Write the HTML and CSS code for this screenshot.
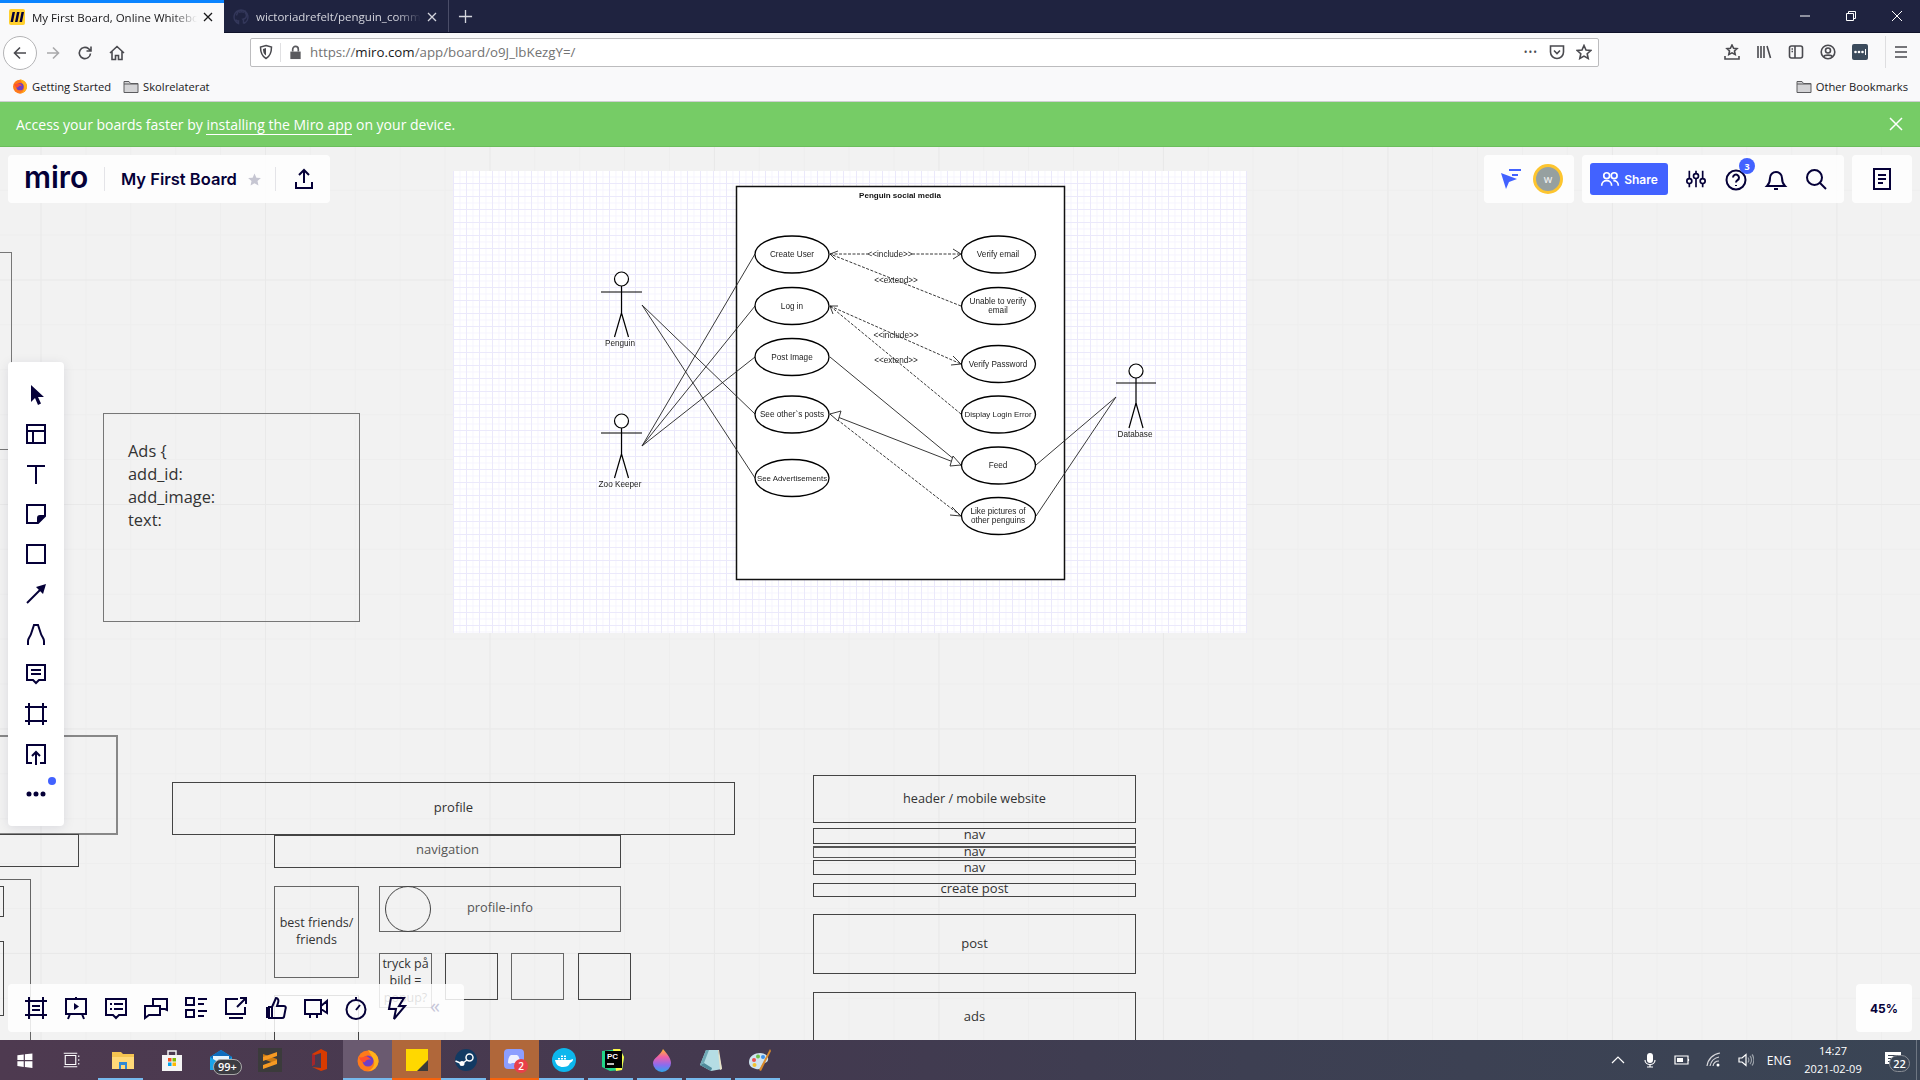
FILE: index.html
```html
<!DOCTYPE html>
<html lang="en">
<head>
  <meta charset="UTF-8">
  <title>My First Board, Online Whiteboard</title>
  <link rel="stylesheet" href="styles.css">
</head>
<body>

  <svg class="defs" width="0" height="0">
    <defs>
      <symbol id="firefox" viewBox="0 0 24 24">
        <circle cx="12" cy="13" r="10.5" fill="#ff7a1a"/>
        <path d="M12 2c5 1 11 5 10.500 12-1 5-5 9-10.500 9 5-2 7-6 6-10-1-3-3-6-6-11z" fill="#ffb21a"/>
        <circle cx="12" cy="13" r="5.500" fill="#6f3fc4"/>
        <path d="M3 9c2 1 5 0 7-1 2 1 4 2 5 4-3-1-5 0-6 2-2 1-5-1-6-5z" fill="#ff4f2e"/>
      </symbol>
      <symbol id="folder" viewBox="0 0 16 16">
        <path d="M1 3.500h5l1.500 2H15v9H1z" fill="#d4d4d6" stroke="#5c5c5f"/>
        <path d="M1 6h14" stroke="#5c5c5f"/>
      </symbol>
    </defs>
  </svg>

  <!-- Browser tabs -->
  <div class="tabstrip">
    <div class="tab tab-active">
      <svg class="favicon" viewBox="0 0 16 16">
        <rect width="16" height="16" rx="2" fill="#ffd02f"/>
        <path d="M3.500 3h2.500l-2 10H1.500zM8 3h2.500l-2 10H6zM12.500 3H15l-2 10h-2.500z" fill="#050038"/>
      </svg>
      <span class="tab-title">My First Board, Online Whiteboard</span>
      <svg class="tab-x" viewBox="0 0 12 12"><path d="M2 2l8 8M10 2l-8 8"/></svg>
    </div>
    <div class="tab tab-other">
      <svg class="favicon" viewBox="0 0 16 16">
        <path d="M8 1a7 7 0 0 0-2.500 13.500v-2.500c-2 .4-2.500-.8-2.800-1.500M10.500 14.500V12c0-1-.3-1.500-.6-1.800 2-.3 3.500-1 3.500-3.700 0-1-.3-1.600-.9-2.200.2-.6.1-1.400-.1-2-.8 0-1.500.4-2 .8a7 7 0 0 0-3.800 0c-.5-.4-1.200-.8-2-.8-.2.6-.3 1.400-.1 2-.6.600-.9 1.200-.9 2.200M8 1a7 7 0 0 1 2.500 13.500" fill="none" stroke="#33375a" stroke-width="1.500"/>
      </svg>
      <span class="tab-title">wictoriadrefelt/penguin_community</span>
      <svg class="tab-x" viewBox="0 0 12 12"><path d="M2 2l8 8M10 2l-8 8"/></svg>
    </div>
    <div class="tab-new">
      <svg viewBox="0 0 16 16"><path d="M8 1v14M1 8h14"/></svg>
    </div>
    <div class="win-controls">
      <svg viewBox="0 0 12 12"><path d="M1 6h10"/></svg>
      <svg viewBox="0 0 12 12"><path d="M1.500 3.500h7v7h-7zM3.500 3.500v-2h7v7h-2"/></svg>
      <svg viewBox="0 0 12 12"><path d="M1 1l10 10M11 1L1 11"/></svg>
    </div>
  </div>

  <!-- Nav bar -->
  <div class="navbar">
    <div class="nav-back">
      <svg class="nav-icon" viewBox="0 0 16 16"><path d="M14 8H2.500M8 2.500L2.500 8 8 13.500"/></svg>
    </div>
    <svg class="nav-icon nav-fwd" viewBox="0 0 16 16"><path d="M2 8h11.500M8 2.500L13.500 8 8 13.500"/></svg>
    <svg class="nav-icon nav-reload" viewBox="0 0 16 16"><path d="M13.500 8.500A5.600 5.600 0 1 1 11.500 3.700L14 6M14 1.500V6H9.500"/></svg>
    <svg class="nav-icon nav-home" viewBox="0 0 16 16"><path d="M1 8l7-6.500L15 8M3 6.500V14.500h3.500v-4h3v4H13V6.500"/></svg>

    <div class="urlbar">
      <svg class="url-shield" viewBox="0 0 16 16"><path d="M8 1.500l5.500 1.500c0 5-1 9-5.500 11.500C3.500 12 2.500 8 2.500 3z"/><path class="shield-half" d="M8 4v7.500C5.500 10 5 7.500 5 5z"/></svg>
      <span class="url-sep"></span>
      <svg class="url-lock" viewBox="0 0 16 16"><path d="M2.500 7h11v8h-11z"/><path class="lock-arc" d="M5 7V4.500a3 3 0 0 1 6 0V7"/></svg>
      <span class="url-text">https://<b>miro.com</b>/app/board/o9J_lbKezgY=/</span>
      <span class="url-right">
        <span class="url-dots">•••</span>
        <svg class="nav-icon nav-pocket" viewBox="0 0 16 16"><path d="M1.500 2h13v6a6.500 6.500 0 0 1-13 0zM5 6.500l3 3 3-3"/></svg>
        <svg class="nav-icon nav-star" viewBox="0 0 16 16"><path d="M8 1.500l2 4.500 4.800.5-3.600 3.200 1 4.800L8 12.100l-4.200 2.400 1-4.800L1.200 6.500 6 6z"/></svg>
      </span>
    </div>

    <div class="nav-tools">
      <svg class="nav-icon" viewBox="0 0 16 16"><path d="M8 1l1.600 3.300 3.400.4-2.500 2.300.7 3.500L8 8.800l-3.200 1.700.7-3.500L3 4.700l3.400-.4zM1 12v3h14v-3"/></svg>
      <svg class="nav-icon" viewBox="0 0 16 16"><path d="M2 2v12M5 2v12M8 2v12M11 2l3.500 12"/></svg>
      <svg class="nav-icon" viewBox="0 0 16 16"><rect x="1.500" y="2" width="13" height="12" rx="2"/><path d="M7 2v12M3.500 5H5M3.500 7.500H5"/></svg>
      <svg class="nav-icon" viewBox="0 0 16 16"><circle cx="8" cy="8" r="6.800"/><circle cx="8" cy="6.500" r="2.500"/><path d="M3.500 13c1-2.500 8-2.500 9 0"/></svg>
      <svg class="lastpass" viewBox="0 0 16 16"><rect width="16" height="16" rx="2" fill="#3b4b5c"/><circle cx="3.500" cy="8" r="1.300" fill="#fff"/><circle cx="7" cy="8" r="1.300" fill="#fff"/><circle cx="10.500" cy="8" r="1.300" fill="#fff"/><path d="M13.500 5v6" stroke="#fff"/></svg>
      <span class="nav-div"></span>
      <svg class="nav-icon nav-menu" viewBox="0 0 16 16"><path d="M2 3h12M2 8h12M2 13h12"/></svg>
    </div>
  </div>

  <!-- Bookmarks -->
  <div class="bookmarks">
    <svg class="bm-icon bm-ff"><use href="#firefox"/></svg>
    <span class="bm-label">Getting Started</span>
    <svg class="bm-icon bm-folder"><use href="#folder"/></svg>
    <span class="bm-label">Skolrelaterat</span>
    <span class="bm-other">
      <svg class="bm-icon"><use href="#folder"/></svg>
      <span class="bm-label">Other Bookmarks</span>
    </span>
  </div>

  <!-- App banner -->
  <div class="banner">
    <span>Access your boards faster by <a class="banner-link">installing the Miro app</a> on your device.</span>
    <svg class="banner-x" viewBox="0 0 14 14"><path d="M1 1l12 12M13 1L1 13"/></svg>
  </div>

  <!-- Board -->
  <div class="board">

    <!-- wireframe leftovers, cut off by the left edge -->
    <div class="wire w-left1"></div>
    <div class="wire w-left2"></div>
    <div class="wire w-left3"></div>
    <div class="wire w-left4"></div>
    <div class="wire w-left5"></div>
    <div class="wire w-left6"></div>

    <div class="wire w-ads-card">
      <p>Ads {</p>
      <p>add_id:</p>
      <p>add_image:</p>
      <p>text:</p>
    </div>

    <div class="wire w-profile">profile</div>
    <div class="wire w-navigation">navigation</div>
    <div class="wire w-friends">best friends/<br>friends</div>
    <div class="wire w-info">profile-info</div>
    <div class="w-avatar"></div>
    <div class="wire w-thumb1">tryck på bild = popup?</div>
    <div class="wire w-thumb2"></div>
    <div class="wire w-thumb3"></div>
    <div class="wire w-thumb4"></div>
    <div class="wire w-under"></div>

    <div class="wire w-header">header / mobile website</div>
    <div class="wire w-nav w-nav1">nav</div>
    <div class="wire w-nav w-nav2">nav</div>
    <div class="wire w-nav w-nav3">nav</div>
    <div class="wire w-create">create post</div>
    <div class="wire w-post">post</div>
    <div class="wire w-ads">ads</div>

    <!-- Use case diagram image -->
    <svg class="diagram" viewBox="453 171 794 462">
      <rect class="d-box" x="736.500" y="186.500" width="328" height="393"/>
      <text class="d-title" x="900" y="198">Penguin social media</text>

      <!-- actor lines -->
      <path class="d-line" d="M642 305L755 414M642 305L755 478M642 446L755 254M642 446L755 306M642 446L755 357"/>
      <path class="d-line" d="M1036 465L1116 397M1036 516L1116 397"/>
      <path class="d-line" d="M830 357L961 465"/>

      <!-- include / extend -->
      <path class="d-dash" d="M830 254H868M912 254H961M961 306L830 254M830 306L961 364M961 414L830 306M830 414L961 516"/>
      <path class="d-line" d="M953 249l8 5-8 5M838 251l-8 3 6 6M953 356l8 8-10 1M838 306l-8 0 3 8M952 507l9 9-11-1"/>
      <path class="d-line" d="M830 414L961 465"/>
      <path class="d-hollow" d="M830 414l11-3-3 10zM961 465l-11 1 3-10z"/>

      <ellipse class="d-node" cx="792" cy="254.500" rx="37" ry="18.500"/>
      <ellipse class="d-node" cx="792" cy="306" rx="37" ry="18.500"/>
      <ellipse class="d-node" cx="792" cy="357" rx="37" ry="18.500"/>
      <ellipse class="d-node" cx="792" cy="414.500" rx="37" ry="18.500"/>
      <ellipse class="d-node" cx="792" cy="478" rx="37" ry="18.500"/>
      <ellipse class="d-node" cx="998.500" cy="254.500" rx="37" ry="18.500"/>
      <ellipse class="d-node" cx="998.500" cy="306" rx="37" ry="18.500"/>
      <ellipse class="d-node" cx="998.500" cy="364" rx="37" ry="18.500"/>
      <ellipse class="d-node" cx="998.500" cy="414.500" rx="37" ry="18.500"/>
      <ellipse class="d-node" cx="998.500" cy="465.500" rx="37" ry="18.500"/>
      <ellipse class="d-node" cx="998.500" cy="516" rx="37" ry="18.500"/>

      <text class="d-label" x="792" y="257">Create User</text>
      <text class="d-label" x="792" y="309">Log in</text>
      <text class="d-label" x="792" y="360">Post Image</text>
      <text class="d-label" x="792" y="417">See other`s posts</text>
      <text class="d-label d-tight" x="792" y="481">See Advertisements</text>
      <text class="d-label" x="998" y="257">Verify email</text>
      <text class="d-label" x="998" y="304">Unable to verify</text>
      <text class="d-label" x="998" y="313">email</text>
      <text class="d-label" x="998" y="367">Verify Password</text>
      <text class="d-label d-tight" x="998" y="417">Display Login Error</text>
      <text class="d-label" x="998" y="468">Feed</text>
      <text class="d-label" x="998" y="514">Like pictures of</text>
      <text class="d-label" x="998" y="523">other penguins</text>

      <text class="d-label" x="890" y="257">&lt;&lt;include&gt;&gt;</text>
      <text class="d-label" x="896" y="283">&lt;&lt;extend&gt;&gt;</text>
      <text class="d-label" x="896" y="338">&lt;&lt;include&gt;&gt;</text>
      <text class="d-label" x="896" y="363">&lt;&lt;extend&gt;&gt;</text>

      <!-- actors -->
      <g class="d-actor">
        <circle cx="621.500" cy="279" r="7"/>
        <path d="M621.500 286V313M601 292H642M621.500 313L614.500 337M621.500 313L628.500 337"/>
      </g>
      <g class="d-actor">
        <circle cx="621.500" cy="421" r="7"/>
        <path d="M621.500 428V454M601 433H642M621.500 454L614.500 478M621.500 454L628.500 478"/>
      </g>
      <g class="d-actor">
        <circle cx="1136" cy="371" r="7"/>
        <path d="M1136 378V403M1116 383H1156M1136 403L1129 428M1136 403L1143 428"/>
      </g>
      <text class="d-label" x="620" y="346">Penguin</text>
      <text class="d-label" x="620" y="487">Zoo Keeper</text>
      <text class="d-label" x="1135" y="437">Database</text>
    </svg>

    <!-- Board top bar -->
    <div class="panel panel-main">
      <span class="miro-logo">miro</span>
      <span class="panel-div"></span>
      <span class="board-name">My First Board</span>
      <svg class="board-star" viewBox="0 0 16 16"><path d="M8 1.500l2 4.500 4.800.5-3.600 3.200 1 4.800L8 12.100l-4.200 2.400 1-4.800L1.200 6.500 6 6z"/></svg>
      <span class="panel-div"></span>
      <svg class="ic board-upload" viewBox="0 0 24 24"><path d="M12 16V3M7 8l5-5 5 5M4 15v6h16v-6"/></svg>
    </div>

    <div class="top-right">
      <div class="panel panel-people">
        <svg class="cursor-filter" viewBox="0 0 24 24"><path class="cf-arrow" d="M2 6l5 16 3-7 8-3z"/><path class="cf-bars" d="M10 3h12M13 8h6"/></svg>
        <span class="avatar">W</span>
      </div>
      <div class="panel panel-actions">
        <button class="share-btn">
          <svg viewBox="0 0 24 24"><circle cx="8" cy="8" r="3.500"/><circle cx="17" cy="8" r="3.500"/><path d="M2 20c0-4 3-6 6-6s6 2 6 6M16 14c3 0 6 2 6 6"/></svg>
          Share
        </button>
        <svg class="ic ic-sliders" viewBox="0 0 24 24"><path d="M4 2v9M4 18v4M12 2v3M12 12v10M20 2v9M20 18v4"/><circle cx="4" cy="14.500" r="3"/><circle cx="12" cy="8.500" r="3"/><circle cx="20" cy="14.500" r="3"/></svg>
        <span class="help">
          <svg class="ic" viewBox="0 0 24 24"><circle cx="12" cy="13" r="9.500"/><path d="M9 10.500a3 3 0 1 1 4.500 2.700c-1 .6-1.500 1.200-1.500 2.300M12 18v1"/></svg>
          <span class="help-badge">3</span>
        </span>
        <svg class="ic" viewBox="0 0 24 24"><path d="M3 19c2-2 3-4 3-8a6 6 0 0 1 12 0c0 4 1 6 3 8zM10 22h4"/></svg>
        <svg class="ic" viewBox="0 0 24 24"><circle cx="10.500" cy="10.500" r="7.500"/><path d="M16 16l6 6"/></svg>
      </div>
      <div class="panel panel-notes">
        <svg class="ic" viewBox="0 0 24 24"><path d="M4 2h16v20H4zM8 8h8M8 12h8M8 16h5"/></svg>
      </div>
    </div>

    <!-- Left tools -->
    <div class="panel tools">
      <svg class="ic ic-solid" viewBox="0 0 24 24"><path d="M7 3v17l4-4 3 7 3-1.500-3-6.500h6z"/></svg>
      <svg class="ic" viewBox="0 0 24 24"><path d="M3 3h18v18H3zM3 9h18M9 9v12"/></svg>
      <svg class="ic ic-t" viewBox="0 0 24 24"><path d="M3 4h18M12 4v18"/></svg>
      <svg class="ic" viewBox="0 0 24 24"><path d="M21 14V3H3v18h11zM14 21v-5a2 2 0 0 1 2-2h5" /><path class="ic-fill" d="M21 14h-5a2 2 0 0 0-2 2v5z"/></svg>
      <svg class="ic" viewBox="0 0 24 24"><path d="M3 3h18v18H3z"/></svg>
      <svg class="ic" viewBox="0 0 24 24"><path d="M3 21L17 7"/><path class="ic-fill" d="M22 2l-3 10-7-7z"/></svg>
      <svg class="ic" viewBox="0 0 24 24"><path d="M4 23v-4c0-3 2-4 3-7l3-9h4l3 9c1 3 3 4 3 7v4"/></svg>
      <svg class="ic" viewBox="0 0 24 24"><path d="M3 3h18v15h-6l-3 3-3-3H3zM7 8h10M7 12h10"/></svg>
      <svg class="ic" viewBox="0 0 24 24"><path d="M5 1v22M19 1v22M1 5h22M1 19h22"/></svg>
      <svg class="ic" viewBox="0 0 24 24"><path d="M8 21H3V3h18v18h-5M12 23V10M8 14l4-4 4 4"/></svg>
      <svg class="ic ic-more" viewBox="0 0 24 24"><circle cx="5" cy="12" r="1.500"/><circle cx="12" cy="12" r="1.500"/><circle cx="19" cy="12" r="1.500"/></svg>
      <span class="tools-dot"></span>
    </div>

    <!-- Bottom tools -->
    <div class="panel bottom-tools">
      <svg class="ic" viewBox="0 0 24 24"><path d="M5 1v22M19 1v22M1 5h22M1 19h22M8 10h8M8 14h8"/></svg>
      <svg class="ic" viewBox="0 0 24 24"><path d="M2 3h20v15H2zM12 1v2M6 18l-2 5M18 18l2 5"/><path class="ic-fill" d="M10 7l5 3.500-5 3.500z"/></svg>
      <svg class="ic" viewBox="0 0 24 24"><path d="M2 3h20v16h-7l-3 3-3-3H2zM6 8h2M6 13h2M10 8h9M10 13h9"/></svg>
      <svg class="ic" viewBox="0 0 24 24"><path d="M9 9V3h14v11l-2-1h-4M1 10h15v9H5l-4 3z"/></svg>
      <svg class="ic" viewBox="0 0 24 24"><path d="M2 2h8v7H2zM2 14h8v7H2zM14 3h9M14 8h6M14 15h9M14 20h6"/></svg>
      <svg class="ic" viewBox="0 0 24 24"><path d="M14 3H2v15h19v-7M5 22h14M13 11L22 2M16 2h6v6"/></svg>
      <svg class="ic" viewBox="0 0 24 24"><path d="M8 11l4-9c2 0 3 2 2 5l-1 3h7c2 0 2 2 1.500 3L20 21c-.5 1-1 1-2 1H8zM3 11v11M8 11H5v11h3"/></svg>
      <svg class="ic" viewBox="0 0 24 24"><path d="M1 4h16v14H1zM17 10l6-5v12l-6-4M6 18v4M13 18v4"/></svg>
      <svg class="ic" viewBox="0 0 24 24"><circle cx="12" cy="13.500" r="9.500"/><path d="M12 1v3M12 14l4-5"/></svg>
      <svg class="ic" viewBox="0 0 24 24"><path d="M7 2h13l-5 8h6L10 23l2-10H5z"/></svg>
      <span class="collapse">«</span>
    </div>

    <div class="panel zoom-level">45%</div>
  </div>

  <!-- Windows taskbar -->
  <div class="taskbar">
    <div class="task-item">
      <svg class="task-icon win-icon" viewBox="0 0 24 24"><path d="M3 5.500l8-1.200V11.500H3zM12.500 4.100L22 3v8.500h-9.500zM3 13h8v7.200l-8-1.200zM12.500 13H22v8.500l-9.500-1.300z" fill="#fff"/></svg>
    </div>
    <div class="task-item">
      <svg class="task-icon tv-icon" viewBox="0 0 24 24"><path d="M3 6h14v12H3zM1 3h18M1 21h18M21 6v2M21 11v2M21 16v2" /></svg>
    </div>
    <div class="task-item is-open">
      <svg class="task-icon" viewBox="0 0 24 24"><path d="M1 4h9l2 2h11v15H1z" fill="#f5c451"/><path d="M1 9h22v12H1z" fill="#ffd978"/><path d="M8 14h8v7h-2v-4h-4v4H8z" fill="#2f8ad6"/></svg>
    </div>
    <div class="task-item">
      <svg class="task-icon" viewBox="0 0 24 24"><path d="M2 7h20v16H2z" fill="#f4f4f4"/><path d="M8 7V3h8v4" fill="none" stroke="#f4f4f4" stroke-width="1.500"/><path d="M8 10h3.500v3.500H8z" fill="#f25022"/><path d="M12.500 10H16v3.500h-3.500z" fill="#7fba00"/><path d="M8 14.500h3.500V18H8z" fill="#00a4ef"/><path d="M12.500 14.500H16V18h-3.500z" fill="#ffb900"/></svg>
    </div>
    <div class="task-item">
      <svg class="task-icon" viewBox="0 0 24 24"><path d="M1 9l11-7 11 7v13H1z" fill="#1aa3e8"/><path d="M1 9l11 7 11-7v0l-11-7z" fill="#0f6cbd"/><path d="M4 8h16v3l-8 5-8-5z" fill="#e7f4fd"/></svg>
      <span class="task-count">99+</span>
    </div>
    <div class="task-item">
      <svg class="task-icon" viewBox="0 0 24 24"><rect width="24" height="24" fill="#3b3b3b"/><path d="M5 11l14 5v-5L5 6z" fill="#c97a14"/><path d="M19 4L5 9v4l14-5zM19 12L5 17v4l14-5z" fill="#f59a23"/></svg>
    </div>
    <div class="task-item">
      <svg class="task-icon" viewBox="0 0 24 24"><path d="M14 1l6 3v17l-6 2-9-4 9 1V5L8 7v9l-3 2V6z" fill="#d83b01"/><path d="M5 6l3 1v9l-3 2z" fill="#a4262c"/></svg>
    </div>
    <div class="task-item is-active">
      <svg class="task-icon"><use href="#firefox"/></svg>
    </div>
    <div class="task-item is-warn">
      <svg class="task-icon" viewBox="0 0 24 24"><path d="M1 1h22v16l-6 6H1z" fill="#ffd800"/><path d="M23 12v11H12z" fill="#3a3a3a"/></svg>
    </div>
    <div class="task-item is-open">
      <svg class="task-icon" viewBox="0 0 24 24"><circle cx="12" cy="12" r="11" fill="#123a63"/><circle cx="15.500" cy="9.500" r="3.500" fill="none" stroke="#fff" stroke-width="1.500"/><circle cx="8" cy="15.500" r="2.500" fill="#fff"/><path d="M1.500 13l6 2.500M9 15l4-3" stroke="#fff" stroke-width="1.500"/></svg>
    </div>
    <div class="task-item is-warn">
      <svg class="task-icon" viewBox="0 0 24 24"><rect x="1" y="1" width="20" height="20" rx="4" fill="#8c9eff"/><path d="M5 15c0-4 1-7 3-8h6c2 1 3 4 3 8-2 1-3 1-4 0H9c-1 1-2 1-4 0z" fill="#eef0ff"/></svg>
      <span class="task-badge">2</span>
    </div>
    <div class="task-item is-open">
      <svg class="task-icon" viewBox="0 0 24 24"><circle cx="12" cy="12" r="12" fill="#0db7ed"/><path d="M3 12h15c1 0 2-1 3-1 0 3-2 3-3 4-1 3-4 4-7 4-4 0-7-2-8-7z" fill="#fff"/><path d="M6 10h2v1.500H6zM9 10h2v1.500H9zM12 10h2v1.500h-2zM9 7.500h2V9H9zM12 7.500h2V9h-2z" fill="#fff"/></svg>
    </div>
    <div class="task-item is-open">
      <svg class="task-icon" viewBox="0 0 24 24"><path d="M1 3l18-2 4 8-2 13-12 1-8-4z" fill="#21d789"/><path d="M12 1l7 0 4 8-2 13-6 1z" fill="#fcf84a"/><path d="M4 3h17v17H4z" fill="#000"/><text class="pc-text" x="6" y="11">PC</text><path d="M6 16h7" stroke="#fff" stroke-width="1.500"/></svg>
    </div>
    <div class="task-item is-open">
      <svg class="task-icon" viewBox="0 0 24 24"><defs><linearGradient id="drop" x1="0" y1="0" x2="0" y2="1"><stop offset="0" stop-color="#ffb92e"/><stop offset=".35" stop-color="#f05fa8"/><stop offset=".7" stop-color="#8a6cf0"/><stop offset="1" stop-color="#2ea7e8"/></linearGradient></defs><path d="M13 1c4 5 8 9 8 14a9 9 0 0 1-18 0c0-5 8-8 10-14z" fill="url(#drop)"/></svg>
    </div>
    <div class="task-item is-open">
      <svg class="task-icon" viewBox="0 0 24 24"><path d="M7 2h12l4 19-11 2-11-6z" fill="#b5dde4"/><path d="M1 17l11 6 1-3-8-5z" fill="#4f8a9a"/><path d="M7 2L1 17l4-2 5-13z" fill="#6fa9b5"/><path d="M19 2h1l3 19-2 1z" fill="#e8e2c8"/></svg>
    </div>
    <div class="task-item is-open">
      <svg class="task-icon" viewBox="0 0 24 24"><path d="M1 14c0-6 6-9 11-9s9 3 8 7-5 2-6 5-2 5-6 4-7-3-7-7z" fill="#cfe3ef"/><circle cx="6" cy="12" r="2" fill="#e8504f"/><circle cx="10" cy="8.500" r="2" fill="#6cc04a"/><circle cx="15" cy="9" r="2" fill="#3b8ee8"/><circle cx="6.500" cy="17" r="2" fill="#f2c230"/><path d="M22 1l1 2-10 20-2-1z" fill="#d98a2b"/></svg>
    </div>

    <div class="tray">
      <svg class="tray-item" viewBox="0 0 16 16"><path d="M2 11l6-6 6 6"/></svg>
      <svg class="tray-item" viewBox="0 0 16 16"><rect class="tray-fill" x="5" y="1" width="6" height="10" rx="3"/><path d="M3 8c0 6 10 6 10 0M8 12v3M5 15h6"/></svg>
      <svg class="tray-item" viewBox="0 0 16 16"><path d="M1 4h13v8H1zM14.500 7v2"/><path class="tray-fill" d="M3 6h6v4H3z"/></svg>
      <svg class="tray-item tray-dim" viewBox="0 0 16 16"><path d="M1 14C2 7 7 2 14 1M4 14c1-5 4-8 9-9M7 14c.6-3 3-5 6-5"/><circle class="tray-fill" cx="12" cy="13" r="1.500"/></svg>
      <svg class="tray-item" viewBox="0 0 16 16"><path d="M1 6h3l4-3.500v11L4 10H1z"/><path class="tray-dimline" d="M10 5.500c1 1.500 1 3.500 0 5M12 4c2 2 2 6 0 8M14 2.500c2.500 3 2.500 8 0 11"/></svg>
      <span class="tray-lang">ENG</span>
      <div class="tray-clock">
        <span>14:27</span>
        <span>2021-02-09</span>
      </div>
      <div class="tray-notify">
        <svg viewBox="0 0 18 18"><path class="tray-fill" d="M1 1h16v12H1z"/><path d="M4 4.500h10M4 7.500h10M4 10.500h10" stroke="#3a4555"/></svg>
        <span class="notify-count">22</span>
      </div>
      <span class="show-desktop"></span>
    </div>
  </div>

</body>
</html>
```

FILE: styles.css
```css
html, body {
  height: 100%;
  margin: 0;
  overflow: hidden;
  font-family: "Open Sans", sans-serif;
}

body {
  display: flex;
  flex-direction: column;
  background: #f2f2f2;
}

.defs {
  position: absolute;
}

/* Browser tabs */
.tabstrip {
  display: flex;
  height: 33px;
  flex: none;
  background: #1f2340;
  border-bottom: 1px solid #10132a;
  box-sizing: border-box;
}

.tab {
  display: flex;
  align-items: center;
  width: 225px;
  box-sizing: border-box;
  padding: 0 10px 0 9px;
  font-size: 11.500px;
}

.tab-active {
  background: #f9f9fa;
  border-top: 3px solid #0a84ff;
  color: #18181a;
  height: 33px;
  width: 224px;
  padding-bottom: 2px;
}

.tab-other {
  color: #d4d5dd;
  border-right: 1px solid #4a4d68;
  padding-top: 1px;
}

.favicon {
  width: 16px;
  height: 16px;
  flex: none;
  margin-right: 7px;
}

.tab-title {
  flex: 1;
  overflow: hidden;
  white-space: nowrap;
  -webkit-mask-image: linear-gradient(90deg, #000 85%, transparent);
  mask-image: linear-gradient(90deg, #000 85%, transparent);
}

.tab-x {
  width: 12px;
  height: 12px;
  margin-left: 5px;
  fill: none;
  stroke: currentColor;
  stroke-width: 1.3;
}

.tab-new {
  display: flex;
  align-items: center;
  padding-left: 9px;
}

.tab-new svg {
  width: 15px;
  height: 15px;
  fill: none;
  stroke: #d4d5dd;
  stroke-width: 1.4;
}

.win-controls {
  display: flex;
  align-items: center;
  gap: 34px;
  margin-left: auto;
  padding-right: 17px;
}

.win-controls svg {
  width: 12px;
  height: 12px;
  fill: none;
  stroke: #fff;
}

/* Nav bar */
.navbar {
  display: flex;
  align-items: center;
  height: 37px;
  flex: none;
  background: #f9f9fa;
  padding-left: 3px;
  padding-top: 3px;
  box-sizing: border-box;
}

.nav-icon {
  width: 16px;
  height: 16px;
  flex: none;
  fill: none;
  stroke: #4a4a4f;
  stroke-width: 1.6;
}

.nav-back {
  display: flex;
  align-items: center;
  justify-content: center;
  width: 32px;
  height: 32px;
  border: 1px solid #b4b4b6;
  border-radius: 50%;
  background: #fff;
}

.nav-fwd {
  margin-left: 8px;
  stroke: #a9a9ab;
}

.nav-reload {
  margin-left: 16px;
}

.nav-home {
  margin-left: 16px;
}

.urlbar {
  display: flex;
  align-items: center;
  width: 1349px;
  height: 29px;
  background: #fff;
  border: 1px solid #bcbcbe;
  border-radius: 2px;
  box-sizing: border-box;
  padding-left: 7px;
  margin-left: 125px;
  margin-top: -2px;
}

.url-shield {
  width: 16px;
  height: 16px;
  fill: none;
  stroke: #4a4a4f;
  stroke-width: 1.5;
}

.shield-half {
  fill: #4a4a4f;
  stroke: none;
}

.url-sep {
  width: 1px;
  height: 19px;
  background: #e0e0e2;
  margin: 0 7px 0 6px;
}

.url-lock {
  width: 15px;
  height: 15px;
  fill: #5a5a5e;
}

.lock-arc {
  fill: none;
  stroke: #5a5a5e;
  stroke-width: 1.8;
}

.url-text {
  margin-left: 7px;
  font-size: 13.300px;
  color: #737373;
}

.url-text b {
  font-weight: 400;
  color: #18181a;
}

.url-right {
  display: flex;
  align-items: center;
  gap: 11px;
  margin-left: auto;
  padding-right: 6px;
}

.url-dots {
  font-size: 10px;
  letter-spacing: 1px;
  color: #4a4a4f;
}

.nav-tools {
  display: flex;
  align-items: center;
  gap: 16px;
  margin-left: 125px;
  margin-top: -3px;
}

.lastpass {
  width: 16px;
  height: 16px;
}

.nav-div {
  width: 1px;
  height: 32px;
  background: #dedee0;
  margin-left: 1px;
}

.nav-menu {
  margin-left: -9px;
}

/* Bookmarks */
.bookmarks {
  display: flex;
  align-items: center;
  height: 32px;
  flex: none;
  background: #f9f9fa;
  border-bottom: 1px solid #cfcfd1;
  box-sizing: border-box;
  padding: 1px 12px 0 12px;
  font-size: 11.200px;
  color: #18181a;
}

.bm-icon {
  width: 16px;
  height: 16px;
  flex: none;
}

.bm-label {
  margin-left: 4px;
}

.bm-folder {
  margin-left: 12px;
}

.bm-other {
  display: flex;
  align-items: center;
  margin-left: auto;
}

/* App banner */
.banner {
  display: flex;
  align-items: center;
  justify-content: space-between;
  height: 45px;
  flex: none;
  background: #76cc66;
  border-bottom: 1px solid #6bbd5c;
  box-sizing: border-box;
  padding: 0 17px 0 16px;
  font-size: 14px;
  color: #fff;
}

.banner-link {
  border-bottom: 1px solid #fff;
}

.banner-x {
  width: 14px;
  height: 14px;
  fill: none;
  stroke: #fff;
  stroke-width: 1.5;
}

/* Board */
.board {
  position: relative;
  flex: 1;
  overflow: hidden;
  background-color: #f2f2f2;
  background-image:
    linear-gradient(90deg, #e9e9e9 1px, transparent 1px),
    linear-gradient(#e9e9e9 1px, transparent 1px),
    linear-gradient(90deg, #eeeeee 1px, transparent 1px),
    linear-gradient(#eeeeee 1px, transparent 1px);
  background-size: 224.500px 224.500px, 224.500px 224.500px, 44.900px 44.900px, 44.900px 44.900px;
  background-position: 40.500px 132.500px, 40.500px 132.500px, 40.500px 42.700px, 40.500px 42.700px;
}

.wire {
  position: absolute;
  display: flex;
  align-items: center;
  justify-content: center;
  box-sizing: border-box;
  border: 1px solid #444;
  padding-bottom: 3px;
  font-size: 13px;
  color: #333;
  text-align: center;
  line-height: 17px;
}

.w-left1 { left: -20px; top: 105px; width: 32px; height: 198px; border-color: #777; }
.w-left2 { left: -20px; top: 588px; width: 138px; height: 100px; border-width: 2px; border-color: #888; }
.w-left3 { left: -20px; top: 687px; width: 99px; height: 33px; }
.w-left4 { left: -20px; top: 732px; width: 51px; height: 220px; border-color: #666; }
.w-left5 { left: -20px; top: 739px; width: 24px; height: 31px; }
.w-left6 { left: -20px; top: 794px; width: 24px; height: 75px; }

.w-ads-card {
  display: block;
  left: 103px;
  top: 266px;
  width: 257px;
  height: 209px;
  padding: 25px 0 0 24px;
  border-color: #777;
  font-size: 16.400px;
  line-height: 23px;
  text-align: left;
}

.w-ads-card p {
  margin: 0;
}

.w-profile { left: 172px; top: 635px; width: 563px; height: 53px; }
.w-navigation { left: 274px; top: 688px; width: 347px; height: 33px; color: #555; padding-bottom: 5px; }
.w-friends { left: 274px; top: 739px; width: 85px; height: 92px; border-color: #666; font-size: 12.500px; }
.w-info { left: 379px; top: 739px; width: 242px; height: 46px; font-size: 12.800px; color: #555; border-color: #666; }
.w-avatar {
  position: absolute;
  left: 385px;
  top: 739px;
  width: 46px;
  height: 46px;
  box-sizing: border-box;
  border: 1px solid #444;
  border-radius: 50%;
}
.w-thumb1 { left: 379px; top: 806px; width: 53px; height: 55px; padding: 1px 0 0; align-items: flex-start; border-color: #666; line-height: 17px; font-size: 12.500px; }
.w-thumb2 { left: 445px; top: 806px; width: 53px; height: 47px; }
.w-thumb3 { left: 511px; top: 806px; width: 53px; height: 47px; border-color: #666; }
.w-thumb4 { left: 578px; top: 806px; width: 53px; height: 47px; }
.w-under { left: 274px; top: 848px; width: 85px; height: 80px; }

.w-header { left: 813px; top: 628px; width: 323px; height: 48px; padding-bottom: 2px; font-size: 12.700px; }
.w-nav { line-height: 14px; }
.w-nav1 { left: 813px; top: 681px; width: 323px; height: 16px; padding-bottom: 5px; }
.w-nav2 { left: 813px; top: 699px; width: 323px; height: 12px; border-top-width: 2px; border-color: #555; padding-bottom: 4px; }
.w-nav3 { left: 813px; top: 713px; width: 323px; height: 15px; padding-bottom: 2px; }
.w-create { left: 813px; top: 736px; width: 323px; height: 14px; line-height: 14px; padding-bottom: 5px; }
.w-post { left: 813px; top: 767px; width: 323px; height: 60px; padding-bottom: 2px; }
.w-ads { left: 813px; top: 845px; width: 323px; height: 80px; padding-bottom: 31px; }

/* Diagram image */
.diagram {
  position: absolute;
  left: 453px;
  top: 24px;
  width: 794px;
  height: 462px;
  filter: blur(.3px);
  background-color: #fff;
  background-image:
    linear-gradient(90deg, #ebe9fb 1px, transparent 1px),
    linear-gradient(#ebe9fb 1px, transparent 1px),
    linear-gradient(90deg, #f5f4fe 1px, transparent 1px),
    linear-gradient(#f5f4fe 1px, transparent 1px);
  background-size: 13px 13px, 13px 13px, 6.500px 6.500px, 6.500px 6.500px;
  background-position: 0 12px, 0 12px, 0 12px, 0 12px;
}

.d-box {
  fill: #fff;
  stroke: #111;
  stroke-width: 1.500;
}

.d-node {
  fill: #fff;
  stroke: #000;
  stroke-width: 1.300;
}

.d-line {
  fill: none;
  stroke: #222;
  stroke-width: .9;
}

.d-dash {
  fill: none;
  stroke: #222;
  stroke-width: .9;
  stroke-dasharray: 3 1.500;
}

.d-hollow {
  fill: #fff;
  stroke: #222;
  stroke-width: .9;
}

.d-actor {
  fill: #fff;
  stroke: #000;
  stroke-width: 1.200;
}

.d-title,
.d-label {
  font-family: "Liberation Sans", sans-serif;
  text-anchor: middle;
}

.d-title {
  font-size: 8px;
  font-weight: 700;
  fill: #111;
}

.d-label {
  font-size: 8.200px;
  fill: #222;
}

.d-tight {
  font-size: 7.900px;
}

/* Miro panels */
.panel {
  position: absolute;
  display: flex;
  align-items: center;
  box-sizing: border-box;
  background: rgba(255, 255, 255, .85);
  border-radius: 4px;
}

.ic {
  width: 24px;
  height: 24px;
  flex: none;
  fill: none;
  stroke: #050038;
  stroke-width: 2;
}

.ic-solid {
  fill: #050038;
  stroke: none;
}

.ic-fill {
  fill: #050038;
  stroke: none;
}

.panel-main {
  left: 8px;
  top: 8px;
  width: 322px;
  height: 48px;
  padding-left: 16px;
}

.miro-logo {
  flex: none;
  width: 80px;
  font-family: "Inter", sans-serif;
  font-size: 30px;
  font-weight: 600;
  line-height: 1;
  color: #050038;
  margin-top: -4px;
}

.panel-div {
  width: 1px;
  height: 24px;
  flex: none;
  background: #e4e4e8;
}

.board-name {
  margin-left: 16px;
  flex: none;
  font-family: "Inter", sans-serif;
  font-size: 16.500px;
  font-weight: 600;
  color: #050038;
  white-space: nowrap;
}

.board-star {
  width: 15px;
  height: 15px;
  flex: none;
  margin: 0 13px 0 10px;
  fill: #c6c6d2;
}

.board-upload {
  margin-left: 16px;
}

.top-right {
  position: absolute;
  top: 8px;
  right: 8px;
  display: flex;
  gap: 8px;
}

.top-right .panel {
  position: static;
  height: 48px;
}

.panel-people {
  width: 90px;
  padding-left: 15px;
  gap: 10px;
}

.cursor-filter {
  width: 24px;
  height: 24px;
  flex: none;
}

.cf-arrow {
  fill: #4262ff;
}

.cf-bars {
  fill: none;
  stroke: #4262ff;
  stroke-width: 2;
}

.avatar {
  display: flex;
  align-items: center;
  justify-content: center;
  width: 30px;
  height: 30px;
  box-sizing: border-box;
  border: 3px solid #fdc52f;
  border-radius: 50%;
  background: #96a0a0;
  color: #eee;
  font-size: 9px;
  font-weight: 600;
}

.panel-actions {
  width: 262px;
  padding-left: 8px;
  gap: 16px;
}

.share-btn {
  display: flex;
  align-items: center;
  justify-content: center;
  gap: 4px;
  width: 78px;
  height: 32px;
  padding: 0;
  border: none;
  border-radius: 3px;
  background: #4262ff;
  color: #fff;
  font-family: "Inter", sans-serif;
  font-size: 12px;
  font-weight: 600;
}

.share-btn svg {
  width: 20px;
  height: 20px;
  fill: none;
  stroke: #fff;
  stroke-width: 2;
}

.ic-sliders {
  height: 20px;
}

.help {
  position: relative;
  display: flex;
}

.help-badge {
  position: absolute;
  top: -9px;
  right: -7px;
  display: flex;
  align-items: center;
  justify-content: center;
  width: 16px;
  height: 16px;
  border-radius: 50%;
  background: #4262ff;
  color: #fff;
  font-size: 9px;
  font-weight: 700;
}

.panel-notes {
  width: 60px;
  justify-content: center;
}

.tools {
  left: 8px;
  top: 215px;
  width: 56px;
  height: 464px;
  flex-direction: column;
  gap: 16px;
  padding-top: 20px;
  background: #fff;
  box-shadow: 0 2px 12px rgba(5, 0, 56, .1);
}

.tools-dot {
  position: absolute;
  left: 40px;
  top: 415px;
  width: 8px;
  height: 8px;
  border-radius: 50%;
  background: #4262ff;
}

.ic-more {
  fill: #050038;
}

.bottom-tools {
  left: 8px;
  top: 837px;
  width: 456px;
  height: 48px;
  gap: 16px;
  padding-left: 16px;
}

.collapse {
  font-size: 20px;
  line-height: 1;
  color: #c6c6d8;
  margin-left: 6px;
  margin-top: -4px;
}

.zoom-level {
  right: 8px;
  top: 837px;
  width: 56px;
  height: 48px;
  justify-content: center;
  font-family: "Inter", sans-serif;
  font-size: 12px;
  font-weight: 700;
  color: #050038;
  background: rgba(255, 255, 255, .9);
}

/* Windows taskbar */
.taskbar {
  display: flex;
  height: 40px;
  flex: none;
  background: linear-gradient(90deg, #4e3a50 0%, #43394f 40%, #3d3f52 65%, #3a4555 100%);
  color: #fff;
}

.task-item {
  position: relative;
  display: flex;
  align-items: center;
  justify-content: center;
  width: 49px;
  height: 40px;
  box-sizing: border-box;
}

.task-icon {
  width: 24px;
  height: 24px;
  flex: none;
}

.win-icon {
  width: 19px;
  height: 19px;
}

.tv-icon {
  width: 18px;
  height: 18px;
  margin-right: 4px;
  fill: none;
  stroke: #fff;
  stroke-width: 1.500;
}

.is-open::after,
.is-active::after,
.is-warn::after {
  content: "";
  position: absolute;
  left: 0;
  right: 4px;
  bottom: 0;
  height: 2px;
  background: #76b9ed;
}

.is-active {
  background: #6a5a70;
}

.is-active::after {
  right: 0;
}

.is-warn {
  background: #b0673a;
}

.is-warn::after {
  right: 0;
  background: #f7630c;
}

.task-count {
  position: absolute;
  left: 17px;
  top: 19px;
  padding: 0 4px;
  border: 1px solid #aaa;
  border-radius: 9px;
  background: #3c3c42;
  font-size: 11px;
  font-weight: 600;
  line-height: 14px;
}

.task-badge {
  position: absolute;
  left: 24px;
  top: 19px;
  width: 14px;
  height: 14px;
  border-radius: 50%;
  background: #e8404a;
  font-size: 10px;
  font-weight: 600;
  line-height: 14px;
  text-align: center;
}

.pc-text {
  font-family: "Liberation Sans", sans-serif;
  font-size: 8px;
  font-weight: 700;
  fill: #fff;
}

.tray {
  display: flex;
  align-items: center;
  margin-left: auto;
  font-size: 12px;
}

.tray-item {
  width: 16px;
  height: 16px;
  padding: 0 8px;
  fill: none;
  stroke: #fff;
  stroke-width: 1.200;
}

.tray-fill {
  fill: #fff;
  stroke: none;
}

.tray-dim {
  stroke: #d8d8dc;
}

.tray-dimline {
  stroke: #9aa0a8;
}

.tray-lang {
  width: 34px;
  text-align: center;
}

.tray-clock {
  display: flex;
  flex-direction: column;
  align-items: center;
  width: 74px;
  font-size: 11px;
  line-height: 18px;
}

.tray-notify {
  position: relative;
  display: flex;
  justify-content: center;
  width: 46px;
}

.tray-notify svg {
  width: 18px;
  height: 18px;
  fill: none;
}

.notify-count {
  position: absolute;
  left: 19px;
  top: 4px;
  width: 19px;
  height: 15px;
  border: 1px solid #8b8f96;
  border-radius: 9px;
  background: #3a4555;
  font-size: 11px;
  font-weight: 600;
  line-height: 15px;
  text-align: center;
}

.show-desktop {
  width: 3px;
  height: 40px;
  border-left: 1px solid #6e7682;
}
```
